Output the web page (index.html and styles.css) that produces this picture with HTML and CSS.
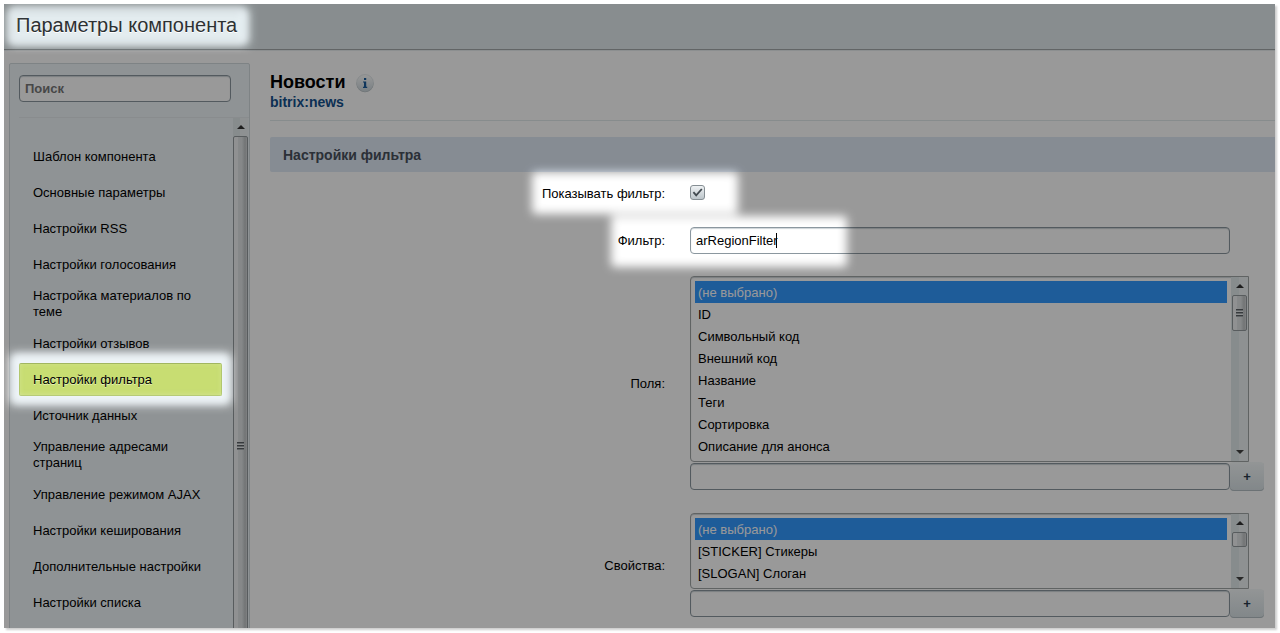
FILE: index.html
```html
<!DOCTYPE html>
<html lang="ru">
<head>
<meta charset="utf-8">
<title>Параметры компонента</title>
<link rel="stylesheet" href="styles.css">
</head>
<body>
<div class="dialog">
  <header class="dialog-head"><h1 class="dialog-title">Параметры компонента</h1></header>
  <div class="dialog-body">
    <aside class="sidebar">
      <div class="search"><input class="field search-field" type="text" placeholder="Поиск" aria-label="Поиск"></div>
      <div class="menu">
        <nav class="menu-list">
          <a class="menu-item" href="#">Шаблон компонента</a>
          <a class="menu-item" href="#">Основные параметры</a>
          <a class="menu-item" href="#">Настройки RSS</a>
          <a class="menu-item" href="#">Настройки голосования</a>
          <a class="menu-item" href="#">Настройка материалов по теме</a>
          <a class="menu-item" href="#">Настройки отзывов</a>
          <a class="menu-item active" href="#">Настройки фильтра</a>
          <a class="menu-item" href="#">Источник данных</a>
          <a class="menu-item" href="#">Управление адресами страниц</a>
          <a class="menu-item" href="#">Управление режимом AJAX</a>
          <a class="menu-item" href="#">Настройки кеширования</a>
          <a class="menu-item" href="#">Дополнительные настройки</a>
          <a class="menu-item" href="#">Настройки списка</a>
        </nav>
        <div class="scroll" aria-hidden="true">
          <span class="arrow up"></span>
          <span class="thumb thumb-fill"><span class="grip"></span></span>
        </div>
      </div>
    </aside>
    <main class="main">
      <div class="component">
        <div class="component-row">
          <h2 class="component-name">Новости</h2>
          <button class="info" type="button" aria-label="Справка">
            <svg width="18" height="19" viewBox="0 0 18 19">
              <defs><linearGradient id="infoFill" x1="0" y1="0" x2="0" y2="1"><stop offset="0" stop-color="#ffffff"/><stop offset="1" stop-color="#cbd6dc"/></linearGradient></defs>
              <circle cx="9" cy="9.8" r="8.5" fill="#a3adb2"/>
              <circle cx="9" cy="9" r="8.5" fill="url(#infoFill)" stroke="#d5dde1" stroke-width="0.6"/>
              <path d="M8 4h2.2v2H8zM7 7.4h3.2v5.4h1V14H7v-1.2h1V8.6H7z" fill="#1c5c9c"/>
            </svg>
          </button>
        </div>
        <a class="component-code" href="#">bitrix:news</a>
      </div>
      <h3 class="section">Настройки фильтра</h3>
      <form class="form">
        <label class="label" for="use">Показывать фильтр:</label>
        <div class="control check-row">
          <span class="check"><input class="check-input" type="checkbox" id="use" checked><svg class="check-mark" width="15" height="15" viewBox="0 0 15 15"><path d="M3.4 7.2 6.2 10.4 11.8 4" fill="none" stroke="#41494f" stroke-width="1.8"/></svg></span>
        </div>
        <label class="label" for="filter">Фильтр:</label>
        <div class="control">
          <div class="field-wrap"><input class="field" type="text" id="filter" value="arRegionFilter"><span class="caret"></span></div>
        </div>
        <label class="label" for="fields">Поля:</label>
        <div class="control">
          <div class="listbox">
            <select class="list" id="fields" size="8" multiple>
              <option selected>(не выбрано)</option><option>ID</option><option>Символьный код</option><option>Внешний код</option><option>Название</option><option>Теги</option><option>Сортировка</option><option>Описание для анонса</option>
            </select>
            <div class="scroll list-scroll" aria-hidden="true"><span class="arrow up"></span><span class="thumb thumb-long"><span class="grip"></span></span><span class="arrow down"></span></div>
          </div>
          <div class="add-row"><input class="field" type="text" aria-label="Другое поле"><button class="add" type="button">+</button></div>
        </div>
        <label class="label" for="props">Свойства:</label>
        <div class="control">
          <div class="listbox">
            <select class="list" id="props" size="3" multiple>
              <option selected>(не выбрано)</option><option>[STICKER] Стикеры</option><option>[SLOGAN] Слоган</option>
            </select>
            <div class="scroll list-scroll" aria-hidden="true"><span class="arrow up"></span><span class="thumb thumb-short"></span><span class="arrow down"></span></div>
          </div>
          <div class="add-row"><input class="field" type="text" aria-label="Другое свойство"><button class="add" type="button">+</button></div>
        </div>
      </form>
    </main>
  </div>
  <svg class="shade" width="100%" height="100%" aria-hidden="true">
    <defs>
      <filter id="soft" filterUnits="userSpaceOnUse" x="-20" y="-20" width="1000" height="500" color-interpolation-filters="sRGB"><feGaussianBlur stdDeviation="5"/></filter>
      <filter id="halo" filterUnits="userSpaceOnUse" x="-20" y="-20" width="1000" height="500"><feGaussianBlur stdDeviation="3"/></filter>
      <mask id="spots" maskUnits="userSpaceOnUse" x="0" y="0" width="100%" height="100%">
        <rect width="100%" height="100%" fill="#fff"/>
        <g filter="url(#soft)">
          <rect x="4" y="4" width="241" height="37" rx="4"/>
          <rect x="6" y="349" width="221" height="52" rx="4"/>
          <rect x="528" y="168" width="206" height="42" rx="4"/>
          <rect x="607" y="212" width="236" height="51" rx="4"/>
        </g>
      </mask>
    </defs>
    <rect width="100%" height="100%" fill="#000" fill-opacity="0.4" mask="url(#spots)"/>
    <g filter="url(#halo)" fill="none" stroke="#f4fbff" stroke-opacity="0.5" stroke-width="6">
      <rect x="7" y="6" width="233" height="32" rx="4"/>
      <rect x="10" y="354" width="213" height="42" rx="4"/>
    </g>
  </svg>
</div>
</body>
</html>
```
FILE: styles.css
```css
* { box-sizing: border-box; }
body {
  margin: 0;
  background: #fff;
  color: #000;
  font: 13px/16px "Liberation Sans", Arial, sans-serif;
}
input, select, button { font: inherit; color: inherit; margin: 0; }
a { color: inherit; text-decoration: none; }
.dialog {
  position: relative;
  display: flex;
  flex-direction: column;
  height: calc(100vh - 9px);
  margin: 4px 5px 5px 4px;
  overflow: hidden;
  background: #fff;
}
body::before {
  content: "";
  position: absolute;
  inset: 4px 5px 5px 4px;
  box-shadow: 2px 2px 2px rgba(0, 0, 0, 0.2);
}
.dialog-head {
  flex: none;
  height: 46px;
  padding: 0 12px;
  border-bottom: 1px solid #a3a9ab;
  background: #e3ecef;
  box-shadow: 0 1px 0 #e9eef0;
}
.dialog-title {
  margin: 0;
  color: #2d3133;
  font-size: 20px;
  font-weight: normal;
  line-height: 43px;
  text-shadow: 0 1px 0 #fff;
}
.dialog-body { flex: 1; min-height: 0; display: flex; align-items: flex-start; }
.sidebar {
  flex: none;
  width: 241px;
  margin: 13px 20px 0 5px;
  border: 1px solid #d2dade;
  border-radius: 2px;
  background: #eff5f8;
}
.search { height: 54px; margin-left: 9px; padding: 11px 18px 0 0; border-bottom: 1px solid #e4eaed; }
.field {
  display: block;
  width: 100%;
  height: 27px;
  padding: 0 5px;
  border: 1px solid #8b979f;
  border-radius: 4px;
  background: #fff;
  box-shadow: inset 0 1px 1px #ccd3d7;
  outline: 0;
}
.search-field { font-weight: bold; }
.search-field::placeholder { color: #777; opacity: 1; }
.menu { display: flex; padding-right: 1px; }
.menu-list { flex: 1; display: flex; flex-direction: column; gap: 3px; padding: 22px 11px 136px 9px; }
.menu-item {
  display: flex;
  align-items: center;
  min-height: 33px;
  padding: 4px 20px 4px 13px;
  border: 0 solid transparent;
  border-left-width: 1px;
}
.menu-item.active {
  border: 1px solid #abc25d;
  border-top-color: #96ad4c;
  border-radius: 2px;
  background: #c8dd72;
  padding-block: 3px;
  text-shadow: 0 1px 0 #e4f0b0;
}
.scroll {
  display: flex;
  flex-direction: column;
  align-items: center;
  flex: none;
  width: 15px;
  background: linear-gradient(90deg, #e1e9ec 0 50%, #edf2f4 50%);
}
.arrow { flex: none; width: 0; height: 0; border: solid transparent; }
.arrow.up { margin: 7px 0; border-width: 0 4px 4px; border-bottom-color: #333; }
.arrow.down { margin: auto 0 7px; border-width: 4px 4px 0; border-top-color: #444; }
.thumb {
  display: flex;
  align-items: center;
  justify-content: center;
  width: 15px;
  border: 1px solid #939a9d;
  border-radius: 2px;
  background: linear-gradient(90deg, #f0f2f3 0 30%, #dfe3e5 35% 60%, #bfc2c4 85%, #d5d8da);
}
.thumb-fill { flex: 1; }
.thumb-long { height: 36px; }
.thumb-short { height: 15px; }
.grip { width: 7px; height: 8px; background: repeating-linear-gradient(#5c6267 0 1px, #a4aaad 1px 2px, #e8ebed 2px 3px); }
.main { flex: 1; min-width: 0; }
.component { height: 71px; padding-top: 22px; border-bottom: 1px solid #e2e9ec; }
.component-row { display: flex; align-items: center; gap: 11px; height: 20px; }
.component-name { margin: 0; font-size: 18px; line-height: 20px; }
.info { width: 18px; height: 19px; padding: 0; border: 0; background: none; margin-top: 3px; }
.info svg { display: block; }
.component-code { display: block; color: #14508c; font-size: 14px; font-weight: bold; line-height: 20px; }
.section {
  margin: 16px 0 0;
  padding: 1px 13px 0;
  border-radius: 2px 0 0 2px;
  background: #dfe9f5;
  color: #48505c;
  font-size: 14px;
  line-height: 34px;
}
.form {
  display: grid;
  grid-template-columns: minmax(0, 395fr) minmax(0, 574fr);
  gap: 22px 25px;
  align-items: center;
  padding: 11px 11px 0 0;
}
.label { text-align: right; }
.check-row { height: 22px; padding-top: 2px; }
.check { position: relative; display: block; width: 15px; height: 15px; }
.check-input {
  appearance: none;
  display: block;
  width: 15px;
  height: 15px;
  border: 1px solid #858e93;
  border-radius: 3px;
  background: linear-gradient(#eef1f3, #bcc5ca);
}
.check-mark { position: absolute; inset: 0; pointer-events: none; }
.field-wrap { position: relative; margin-right: 34px; }
.caret { position: absolute; left: 86px; top: 6px; width: 1px; height: 15px; background: #000; }
.listbox {
  display: flex;
  margin-right: 15px;
  border: 1px solid #a0a5a6;
  border-radius: 4px 0 0 4px;
  box-shadow: inset 0 1px 1px #ccd3d7;
}
.list {
  flex: 1;
  min-width: 0;
  padding: 4px;
  border: 0;
  background: none;
  outline: 0;
  overflow: hidden;
}
.list option { min-height: 22px; padding: 4px 3px 2px; line-height: 16px; }
.list option:checked { background: #39f linear-gradient(#39f, #39f); color: #fff; -webkit-text-fill-color: #fff; }
.list-scroll { width: 17px; }
.add-row { display: flex; align-items: flex-start; }
.add-row .field { flex: 1; margin-top: 1px; }
.add {
  width: 34px;
  height: 29px;
  padding: 0;
  border: 0;
  border-radius: 4px;
  background: linear-gradient(#f5f9fa, #d8e1e5);
  box-shadow: inset 0 -1px 0 #b5bec3;
  color: #2b3b4b;
  font-weight: bold;
}
.shade { position: absolute; inset: 0; pointer-events: none; }
```
